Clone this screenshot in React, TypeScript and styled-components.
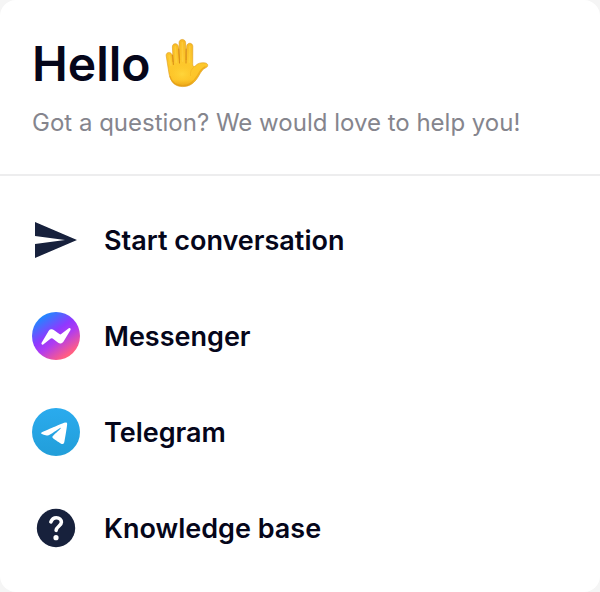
import React from "react";
import styled, { createGlobalStyle } from "styled-components";

const fontStack = `Inter, "Liberation Sans", sans-serif`;

const GlobalStyle = createGlobalStyle`
  * { box-sizing: border-box; }
  body { margin: 0; background: #f5f5f5; font-family: ${fontStack}; color: #05061a; }
`;

const Card = styled.main`
  background: #ffffff;
  border-radius: 16px;
  overflow: hidden;
`;

const Header = styled.header`
  padding: 32px;
  border-bottom: 2px solid #ededee;
`;

const Title = styled.h1`
  margin: 0;
  display: flex;
  align-items: center;
  gap: 12px;
  font-size: 48px;
  line-height: 64px;
  font-weight: 600;
`;

const Subtitle = styled.p`
  margin: 8px 0 0;
  font-size: 24px;
  line-height: 38px;
  font-weight: 400;
  color: #85858d;
`;

const Channels = styled.nav`
  display: flex;
  flex-direction: column;
  padding: 16px 0;
`;

const Channel = styled.button`
  display: flex;
  align-items: center;
  gap: 24px;
  padding: 24px 32px;
  border: 0;
  background: transparent;
  font: 600 27px/36px ${fontStack};
  color: inherit;
  text-align: left;
  cursor: pointer;
`;

const ChannelLabel = styled.span`
  padding-top: 2px;
`;

const ChannelIcon = styled.svg.attrs({ viewBox: "0 0 48 48", "aria-hidden": true })`
  flex: none;
  width: 48px;
  height: 48px;
`;

const HandIcon = styled.svg.attrs({ viewBox: "0 0 48 52", role: "img" })`
  flex: none;
  width: 48px;
  height: 52px;
`;

function RaisedHand() {
  return (
    <HandIcon aria-label="Raised hand">
      <defs>
        <linearGradient id="hand-skin" x1="0" y1="0" x2="0" y2="1">
          <stop offset="0" stopColor="#f8ba22" />
          <stop offset="0.5" stopColor="#fdc82c" />
          <stop offset="0.85" stopColor="#fdc429" />
          <stop offset="1" stopColor="#eba818" />
        </linearGradient>
        <radialGradient id="hand-glow">
          <stop offset="0" stopColor="#ffd53a" />
          <stop offset="1" stopColor="#ffcf30" stopOpacity="0" />
        </radialGradient>
      </defs>
      <path
        d="M5.6 33 L3.2 17.8 C2.8 13.8 8 13.2 8.9 16.8 L10.2 24 L9.4 9 C9.2 4.7 14.8 4.5 15.4 8.6 L16.6 22 L16.1 4.6 C16.1 0.4 22.4 0.4 22.6 4.6 L23.2 22 L23.7 8.2 C24 4.2 29.8 4.3 29.8 8.4 L29.7 25.5 C29.7 28.8 31 29.4 32.8 27.4 C34.8 25.2 38.2 24.4 42 24.9 C45.2 25.3 45.6 28.3 43 29.6 C39.6 31.2 38.2 33.6 36 37.4 C32 44.4 27.5 48.6 19.5 48.6 C10 48.6 6.6 41.5 5.6 33Z"
        fill="url(#hand-skin)"
        stroke="#dd9a1a"
        strokeWidth="0.6"
        strokeLinejoin="round"
      />
      <ellipse cx="19" cy="36" rx="12" ry="9" fill="url(#hand-glow)" />
      <g fill="none" stroke="#ffd64a" strokeWidth="1.8" strokeLinecap="round" opacity="0.5">
        <path d="M6.2 17.6 L8 27 M12.3 9 L13.2 24 M19.3 4.6 L19.7 23 M26.8 8.4 L26.4 24" />
      </g>
      <g fill="none" stroke="#dc9018" strokeWidth="1.1" strokeLinecap="round">
        <path d="M9.5 17 L10.4 26.4 M15.7 11 L16.5 25 M23.2 11 L23 25" />
      </g>
      <path
        d="M7 38.5 C9 45 13 47.5 19.5 47.6 C26.5 47.6 31 43.5 34.6 37.5 C36.8 33.5 38.4 30.6 42.2 28.9"
        fill="none"
        stroke="#df960f"
        strokeWidth="1.3"
        strokeLinecap="round"
        opacity="0.5"
      />
      <path d="M27.5 37.5 C27.2 33.8 28 31.2 30.6 29.4" fill="none" stroke="#e9a317" strokeWidth="0.9" strokeLinecap="round" opacity="0.4" />
    </HandIcon>
  );
}

function SendIcon() {
  return (
    <ChannelIcon>
      <path d="M3 42 L45 24 L3 6 V20 L33 24 L3 28Z" fill="#17213c" />
    </ChannelIcon>
  );
}

function MessengerIcon() {
  return (
    <ChannelIcon>
      <defs>
        <linearGradient id="messenger-fill" x1="0.22" y1="0.04" x2="0.82" y2="0.92">
          <stop offset="0" stopColor="#168fff" />
          <stop offset="0.42" stopColor="#9038ff" />
          <stop offset="0.6" stopColor="#b03cf0" />
          <stop offset="0.93" stopColor="#ff5c86" />
          <stop offset="1" stopColor="#ff6674" />
        </linearGradient>
      </defs>
      <circle cx="24" cy="24" r="24" fill="url(#messenger-fill)" />
      <path
        d="M9.6 30.8 L16.6 18.9 A3.6 3.6 0 0 1 21.8 17.9 L27.4 22.1 A1.5 1.5 0 0 0 29.2 22.1 L36.8 16.3 C37.8 15.5 39.2 16.8 38.5 17.9 L31.4 29.8 A3.6 3.6 0 0 1 26.2 30.8 L20.6 26.6 A1.5 1.5 0 0 0 18.8 26.6 L11.2 32.4 C10.2 33.2 8.9 31.9 9.6 30.8Z"
        fill="#ffffff"
      />
    </ChannelIcon>
  );
}

function TelegramIcon() {
  return (
    <ChannelIcon>
      <defs>
        <linearGradient id="telegram-fill" x1="0" y1="0" x2="0" y2="1">
          <stop offset="0" stopColor="#2aabee" />
          <stop offset="1" stopColor="#229ed9" />
        </linearGradient>
      </defs>
      <circle cx="24" cy="24" r="24" fill="url(#telegram-fill)" />
      <path
        transform="scale(0.2)"
        d="M54.3 118.8c35-15.2 58.3-25.3 70-30.2 33.3-13.9 40.3-16.3 44.8-16.4 1 0 3.2.2 4.7 1.4 1.2 1 1.5 2.3 1.7 3.3s.4 3.1.2 4.7c-1.8 19-9.6 65.1-13.6 86.3-1.7 9-5 12-8.2 12.3-7 .6-12.3-4.6-19-9-10.6-6.9-16.5-11.2-26.8-18-11.9-7.8-4.2-12.1 2.6-19.1 1.8-1.8 32.5-29.8 33.1-32.3.1-.3.1-1.5-.6-2.1-.7-.6-1.7-.4-2.5-.2-1.1.2-17.9 11.4-50.6 33.5-4.8 3.3-9.1 4.9-13 4.8-4.3-.1-12.5-2.4-18.7-4.4-7.5-2.4-13.5-3.7-13-7.9.3-2.2 3.3-4.4 8.9-6.7z"
        fill="#ffffff"
      />
    </ChannelIcon>
  );
}

function HelpIcon() {
  return (
    <ChannelIcon>
      <circle cx="24" cy="24" r="19.2" fill="#17213c" />
      <path
        d="M18.9 17.9 C19.9 15.2 21.8 13.7 24.4 13.7 C27.3 13.7 29.4 15.6 29.4 18.3 C29.4 21.8 24.2 22.7 24.1 26.4"
        fill="none"
        stroke="#ffffff"
        strokeWidth="3.6"
        strokeLinecap="round"
      />
      <circle cx="24" cy="33.7" r="2.6" fill="#ffffff" />
    </ChannelIcon>
  );
}

const channels = [
  { label: "Start conversation", Icon: SendIcon },
  { label: "Messenger", Icon: MessengerIcon },
  { label: "Telegram", Icon: TelegramIcon },
  { label: "Knowledge base", Icon: HelpIcon },
];

export default function App() {
  return (
    <Card>
      <GlobalStyle />
      <Header>
        <Title>
          Hello
          <RaisedHand />
        </Title>
        <Subtitle>Got a question? We would love to help you!</Subtitle>
      </Header>
      <Channels aria-label="Contact options">
        {channels.map(({ label, Icon }) => (
          <Channel key={label} type="button">
            <Icon />
            <ChannelLabel>{label}</ChannelLabel>
          </Channel>
        ))}
      </Channels>
    </Card>
  );
}
